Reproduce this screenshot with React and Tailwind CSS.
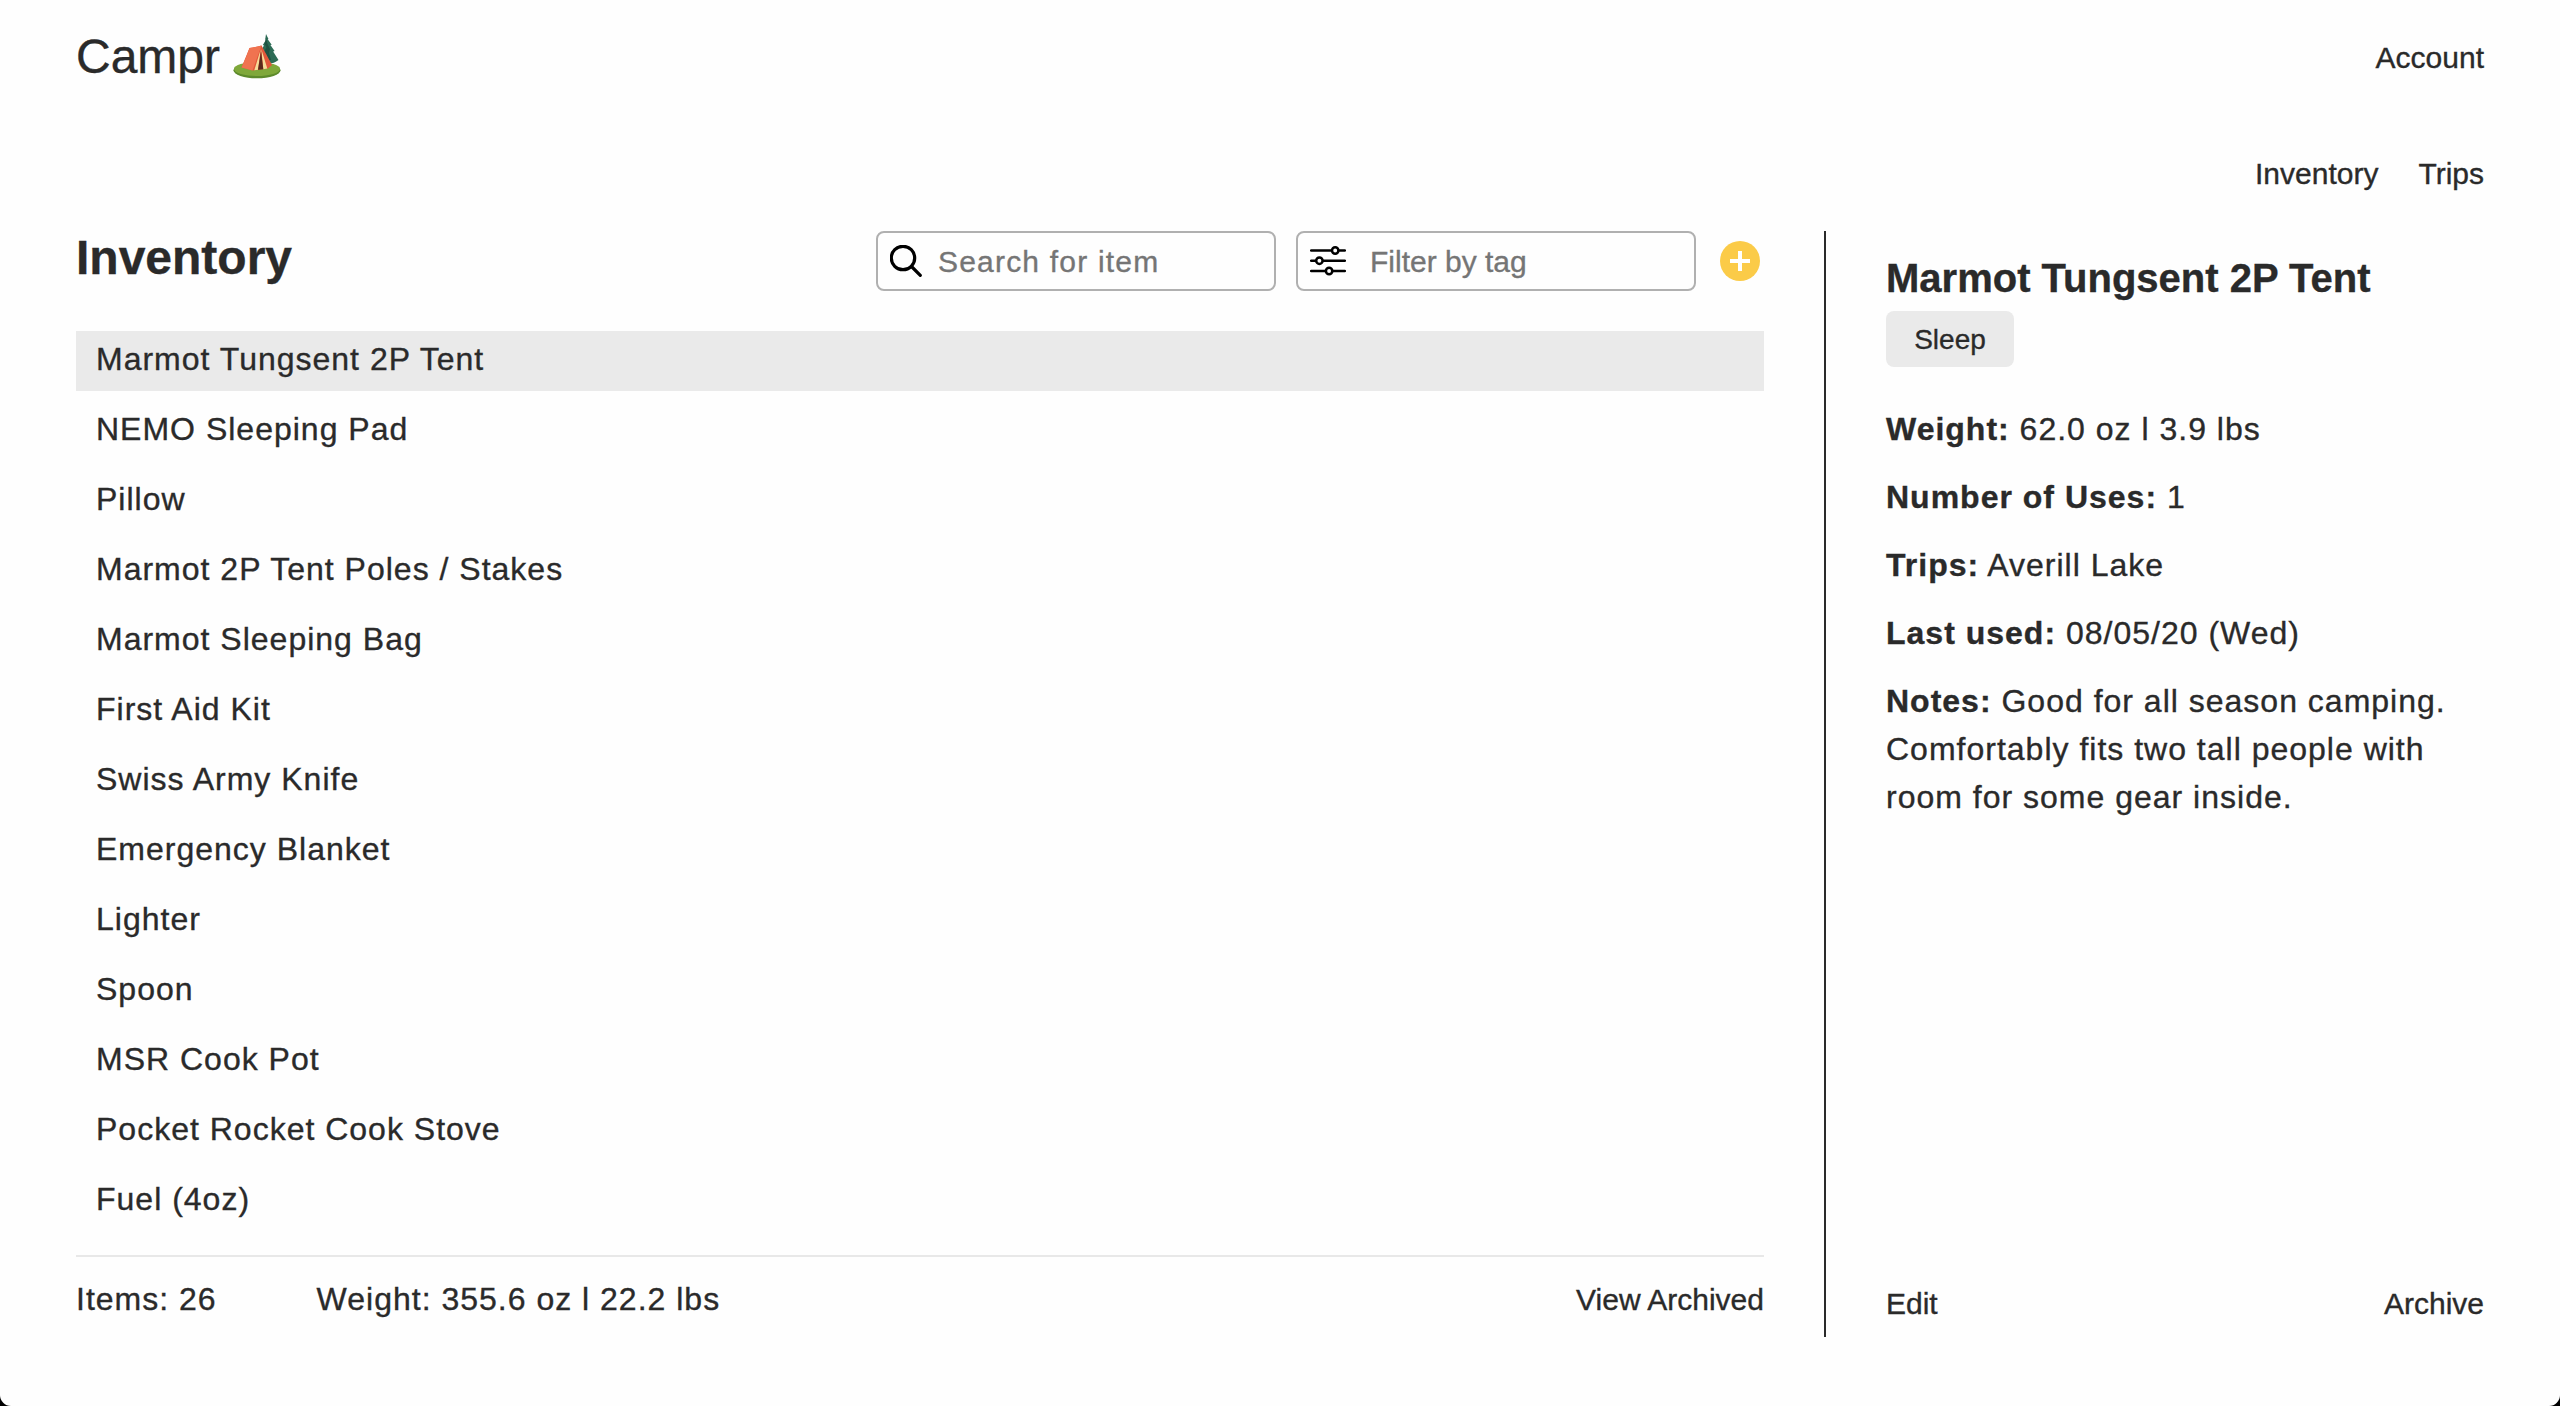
const items = [
  "Marmot Tungsent 2P Tent",
  "NEMO Sleeping Pad",
  "Pillow",
  "Marmot 2P Tent Poles / Stakes",
  "Marmot Sleeping Bag",
  "First Aid Kit",
  "Swiss Army Knife",
  "Emergency Blanket",
  "Lighter",
  "Spoon",
  "MSR Cook Pot",
  "Pocket Rocket Cook Stove",
  "Fuel (4oz)",
];

function Tent() {
  return (
    <svg viewBox="0 0 48 46" className="h-[46px] w-[48px]" aria-label="Camping">
      <ellipse cx="24" cy="36.300" rx="23.500" ry="8" fill="#5d8a2b" />
      <ellipse cx="24" cy="35" rx="23" ry="7" fill="#7fa83a" />
      <path d="M35 26h3v5h-3z" fill="#6b4a2c" />
      <path d="M33 0l2.500 5-.8.200 4 5.500-1.300.300 4.200 6-1.500.400 5.400 8.600q-5 4-11 3.500-8 0-10-5l4-6-1.500-.5 4-6.500-1.200-.4 3.200-5.400-.8-.3z" fill="#2c6b55" />
      <path d="M33 4l-1.500 6 2 3-2.500 5 3 3-2 6 6-1-2-7 1-4-2.500-5z" fill="#1f5242" />
      <path d="M16.500 14q6-1 12-2.500L39 31l-4 3.500-15 2L8.500 33.500z" fill="#e2573a" />
      <path d="M16.500 14q6-1 12-2.500L19.500 36.500 8.500 33.500Q13.500 23 16.500 14z" fill="#f07350" />
      <path d="M27.800 15L21.300 36.200l3.700-.5zM28.300 15l2 20.200 4-.800z" fill="#f5dc98" />
      <path d="M28 17l-3 18.700 5.300-.5z" fill="#5a2a1c" />
    </svg>
  );
}

function SearchIcon() {
  return (
    <svg viewBox="0 0 32 32" className="h-8 w-8" fill="none" stroke="#000" strokeWidth="3.200" strokeLinecap="round">
      <circle cx="13" cy="13" r="11.700" />
      <path d="M21.500 21.500l8.800 8.800" />
    </svg>
  );
}

function FilterIcon() {
  return (
    <svg viewBox="0 0 36 30" className="h-[30px] w-9" fill="none" stroke="#000" strokeWidth="2.500" strokeLinecap="round">
      <path d="M1.200 4.500h20M29.200 4.500h5.600M1.200 14.700h4.200M13.400 14.700h21.400M1.200 25h13.900M23.100 25h11.700" />
      <circle cx="25.200" cy="4.500" r="3.200" />
      <circle cx="9.400" cy="14.700" r="3.200" />
      <circle cx="19.100" cy="25" r="3.200" />
    </svg>
  );
}

function Field({ label, children }) {
  return (
    <p>
      <strong className="font-bold">{label}:</strong> {children}
    </p>
  );
}

export default function App() {
  return (
    <div className="h-[1406px] w-[2560px] overflow-hidden bg-black">
      <div className="flex h-full flex-col rounded-b-[11px] bg-[#fefefe] px-[76px] font-['Liberation_Sans',Arial,sans-serif] text-[30px] text-[#2a2a2a] [-webkit-text-stroke:0.35px]">
        <header className="flex h-[118px] shrink-0 items-center justify-between">
          <div className="flex items-center gap-[13px] pb-[5px]">
            <h1 className="text-[48px] leading-[60px]">Campr</h1>
            <Tent />
          </div>
          <a className="pb-[3px]">Account</a>
        </header>
        <nav className="flex h-[113px] shrink-0 items-center justify-end gap-10 pb-[3px]">
          <a>Inventory</a>
          <a>Trips</a>
        </nav>
        <main className="flex h-[1106px]">
          <section className="flex w-[1688px] flex-col">
            <div className="flex h-[60px] items-center">
              <h2 className="flex-1 pb-1.5 text-[48px] leading-[52px] font-bold">Inventory</h2>
              <div className="flex h-[60px] w-[400px] items-center gap-4 rounded-lg border-2 border-[#b0b0b0] pl-3 text-[#757575]">
                <SearchIcon />
                <span className="pt-px tracking-[1.2px]">Search for item</span>
              </div>
              <div className="ml-5 flex h-[60px] w-[400px] items-center gap-[24px] rounded-lg border-2 border-[#b0b0b0] pl-3 text-[#757575]">
                <FilterIcon />
                <span className="pt-px">Filter by tag</span>
              </div>
              <button className="mr-1 ml-6 flex size-10 items-center justify-center rounded-full bg-[#fbcb48]">
                <svg viewBox="0 0 20 20" className="size-5" stroke="#fff" strokeWidth="4">
                  <path d="M10 0v20M0 10h20" />
                </svg>
              </button>
            </div>
            <ul className="mt-10 flex flex-col gap-2.5 text-[32px] tracking-[1px]">
              {items.map((name, i) => (
                <li key={name} className={i === 0 ? "h-[60px] bg-[#eaeaea] pl-5 leading-[56px]" : "h-[60px] pl-5 leading-[56px]"}>
                  {name}
                </li>
              ))}
            </ul>
            <footer className="mt-[24px] flex h-[82px] items-center border-t-2 border-[#e8e8e8] pt-[4px] text-[32px]">
              <span className="mr-[100px] tracking-[1px]">Items: 26</span>
              <span className="flex-1 tracking-[1px]">Weight: 355.6 oz l 22.2 lbs</span>
              <a className="text-[30px]">View Archived</a>
            </footer>
          </section>
          <aside className="ml-[60px] flex flex-1 flex-col border-l-2 border-[#2a2a2a] pl-[60px]">
            <h3 className="pt-[22px] text-[40px] leading-[50px] font-bold">Marmot Tungsent 2P Tent</h3>
            <span className="mt-2 flex h-14 w-32 items-center justify-center rounded-lg bg-[#eaeaea] pt-0.5 text-[28px]">Sleep</span>
            <div className="mt-[38px] flex flex-1 flex-col gap-5 text-[32px] leading-[48px] tracking-[1px]">
              <Field label="Weight">62.0 oz l 3.9 lbs</Field>
              <Field label="Number of Uses">1</Field>
              <Field label="Trips">Averill Lake</Field>
              <Field label="Last used">08/05/20 (Wed)</Field>
              <Field label="Notes">Good for all season camping. Comfortably fits two tall people with room for some gear inside.</Field>
            </div>
            <div className="flex justify-between pb-[11px]">
              <a>Edit</a>
              <a>Archive</a>
            </div>
          </aside>
        </main>
      </div>
    </div>
  );
}
